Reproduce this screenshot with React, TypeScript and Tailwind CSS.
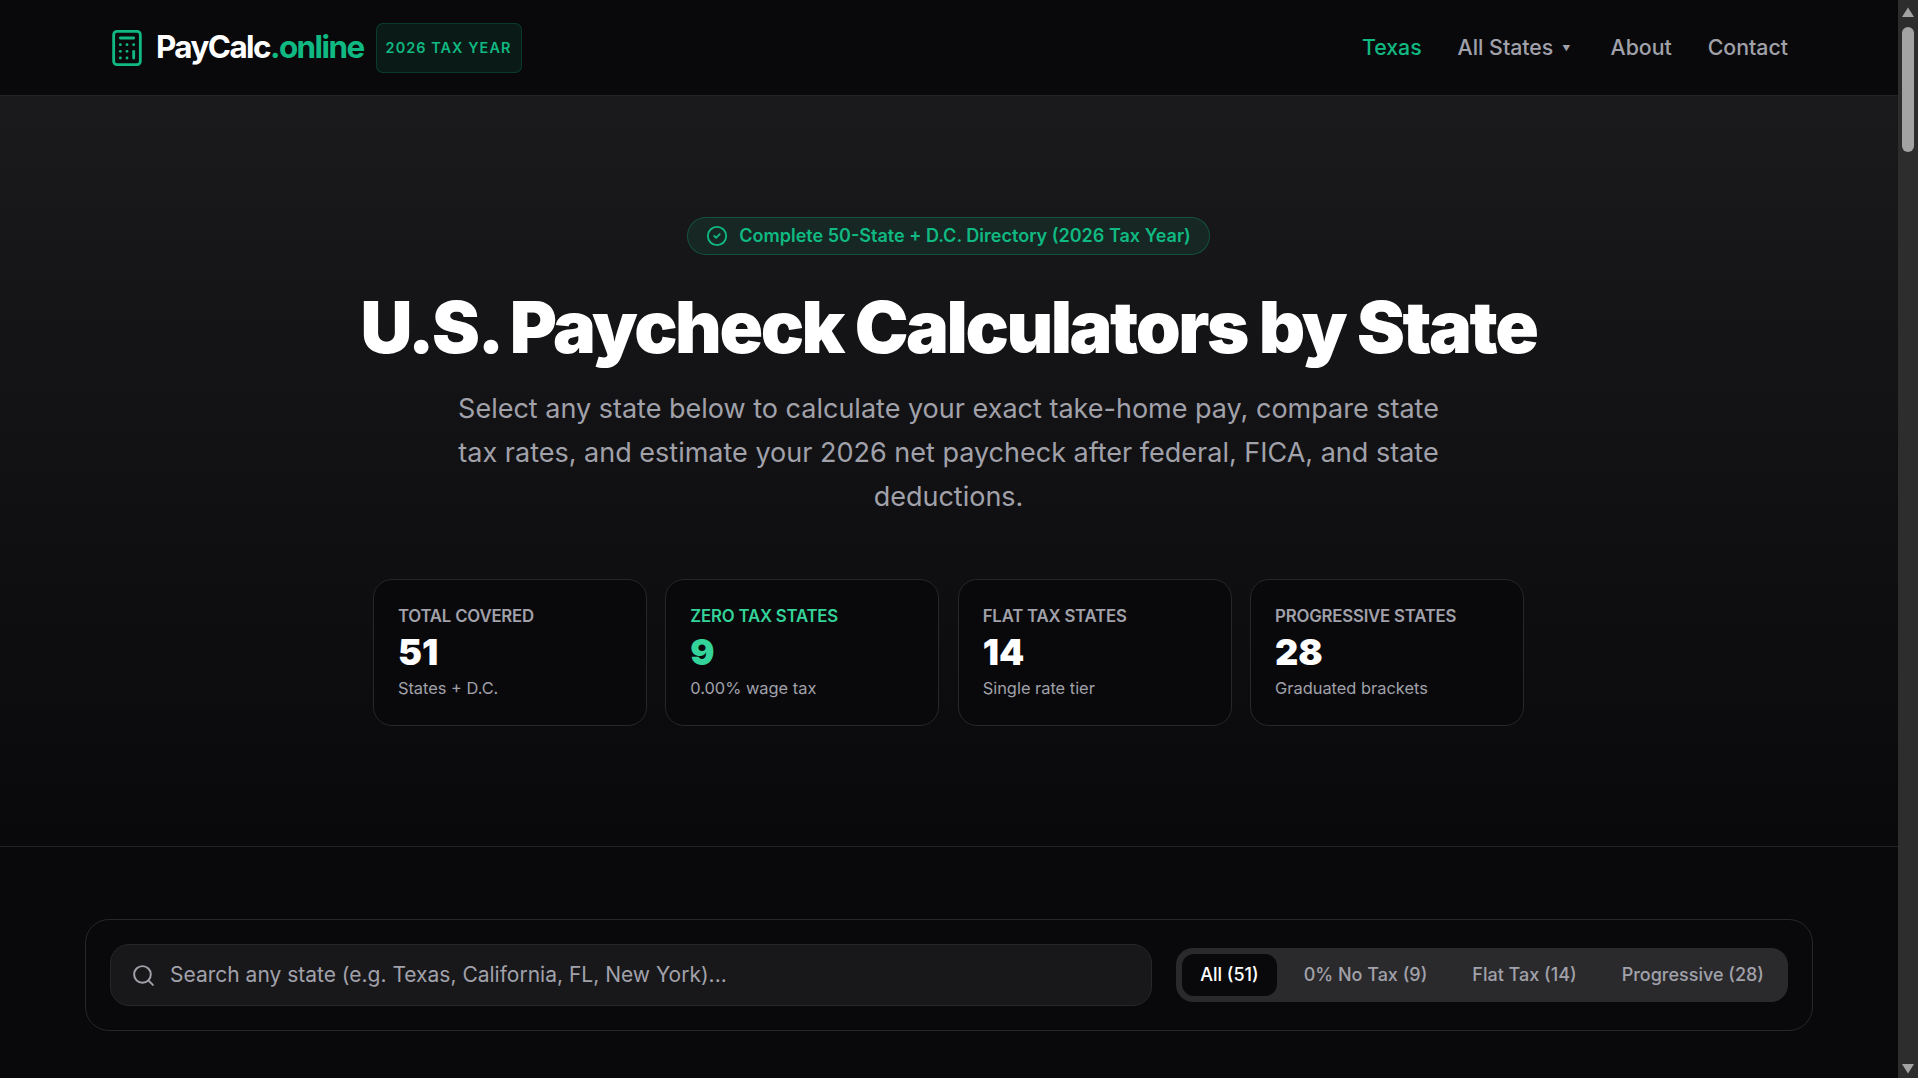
import { Calculator, CircleCheck, Search } from "lucide-react";

const stats = [
  { label: "TOTAL COVERED", value: "51", note: "States + D.C.", accent: false },
  { label: "ZERO TAX STATES", value: "9", note: "0.00% wage tax", accent: true },
  { label: "FLAT TAX STATES", value: "14", note: "Single rate tier", accent: false },
  { label: "PROGRESSIVE STATES", value: "28", note: "Graduated brackets", accent: false },
];

const tabs = ["All (51)", "0% No Tax (9)", "Flat Tax (14)", "Progressive (28)"];

function Header() {
  return (
    <header className="h-[96px] shrink-0 bg-[#09090c] border-b border-[#232326] flex items-center justify-between pl-[107px] pr-[110px]">
      <div className="flex items-center">
        <Calculator className="text-[#10b981] w-[40px] h-[40px] mr-[9px]" strokeWidth={1.7} />
        <span className="text-[31.4px] font-bold tracking-[-0.05em] text-white">
          PayCalc<span className="text-[#10b981]">.online</span>
        </span>
        <span className="ml-[12px] h-[50px] w-[146px] flex items-center justify-center rounded-[7px] border border-[#10b981]/20 bg-[#10b981]/10 text-[#10b981] text-[14.4px] font-semibold tracking-[0.075em]">
          2026 TAX YEAR
        </span>
      </div>
      <nav className="flex items-center text-[21.3px] font-medium text-[#a1a1aa] pt-[1px]">
        <a className="text-[#10b981]">Texas</a>
        <a className="ml-[36px] flex items-center">
          All States
          <span className="ml-[9px] text-[8px]">▼</span>
        </a>
        <a className="ml-[40px]">About</a>
        <a className="ml-[36px]">Contact</a>
      </nav>
    </header>
  );
}

function StatCard({ label, value, note, accent }: (typeof stats)[number]) {
  return (
    <div className="w-[274px] h-[147px] rounded-[19px] border border-[#27272a] bg-[#09090c] px-[24px] pt-[24px]">
      <div className={`text-[16.8px] leading-[24px] font-semibold tracking-[-0.012em] ${accent ? "text-[#34d399]" : "text-[#a1a1aa]"}`}>
        {label}
      </div>
      <div className={`text-[36px] leading-[40px] mt-[4px] font-black ${accent ? "text-[#34d399]" : "text-white"}`}>
        {value}
      </div>
      <div className="text-[16.4px] leading-[24px] mt-[4px] text-[#a1a1aa]">{note}</div>
    </div>
  );
}

function Hero() {
  return (
    <section className="h-[751px] shrink-0 border-b border-[#232326] bg-gradient-to-b from-[#1a1a1d] to-[#09090c] flex flex-col items-center pt-[121px] pr-[1px]">
      <div className="h-[38px] w-[523px] flex items-center justify-center rounded-full border border-[#10b981]/30 bg-[#10b981]/10 text-[#10b981] text-[18.05px] font-semibold pb-[1px]">
        <CircleCheck className="w-[22px] h-[22px] mr-[11px]" strokeWidth={2} />
        Complete 50-State + D.C. Directory (2026 Tax Year)
      </div>
      <h1 className="mt-[29px] text-[72px] leading-[86px] font-black tracking-[-0.034em] text-white">
        U.S. Paycheck Calculators by State
      </h1>
      <p className="mt-[17px] w-[1000px] text-center text-[27px] leading-[44px] text-[#a1a1aa]">
        Select any state below to calculate your exact take-home pay, compare state
        <br />
        tax rates, and estimate your 2026 net paycheck after federal, FICA, and state
        <br />
        deductions.
      </p>
      <div className="mt-[60px] flex gap-[18.4px]">
        {stats.map((s) => (
          <StatCard key={s.label} {...s} />
        ))}
      </div>
    </section>
  );
}

function SearchBar() {
  return (
    <section className="flex-1 bg-[#09090c] pt-[72px]">
      <div className="mx-[85px] h-[112px] rounded-[24px] border border-[#27272a] flex items-center justify-between px-[24px]">
        <div className="w-[1042px] h-[62px] rounded-[19px] border border-[#27272a] bg-[#18181b] flex items-center pl-[20px] text-[21px] text-[#a1a1aa]">
          <Search className="w-[25px] h-[25px] mr-[14px]" strokeWidth={1.9} />
          Search any state (e.g. Texas, California, FL, New York)...
        </div>
        <div className="h-[54px] rounded-[17px] bg-[#2a2a2d] flex items-center gap-[9px] px-[6px] text-[18px] font-medium text-[#a1a1aa]">
          {tabs.map((t, i) => (
            <span
              key={t}
              className={`h-[42px] flex items-center px-[18px] pb-[1px] rounded-[12px] ${i === 0 ? "bg-[#09090c] text-white" : ""}`}
            >
              {t}
            </span>
          ))}
        </div>
      </div>
    </section>
  );
}

function Scrollbar() {
  return (
    <aside className="w-[20px] shrink-0 bg-[#2d2d2d] flex flex-col items-center justify-between pt-[6px] pb-[3px]">
      <div className="flex flex-col items-center w-full">
        <svg width="14" height="12" viewBox="0 0 14 12"><path d="M7 1.5 13 11H1z" fill="#a3a3a3" /></svg>
        <div className="mt-[9px] w-[12px] h-[125px] rounded-full bg-[#a3a3a3]" />
      </div>
      <svg width="14" height="12" viewBox="0 0 14 12"><path d="M7 10.5 1 1h12z" fill="#a3a3a3" /></svg>
    </aside>
  );
}

export default function App() {
  return (
    <div className="h-[1078px] w-[1918px] overflow-hidden flex font-['Inter',sans-serif] bg-[#09090c]">
      <main className="flex-1 flex flex-col min-w-0">
        <Header />
        <Hero />
        <SearchBar />
      </main>
      <Scrollbar />
    </div>
  );
}
